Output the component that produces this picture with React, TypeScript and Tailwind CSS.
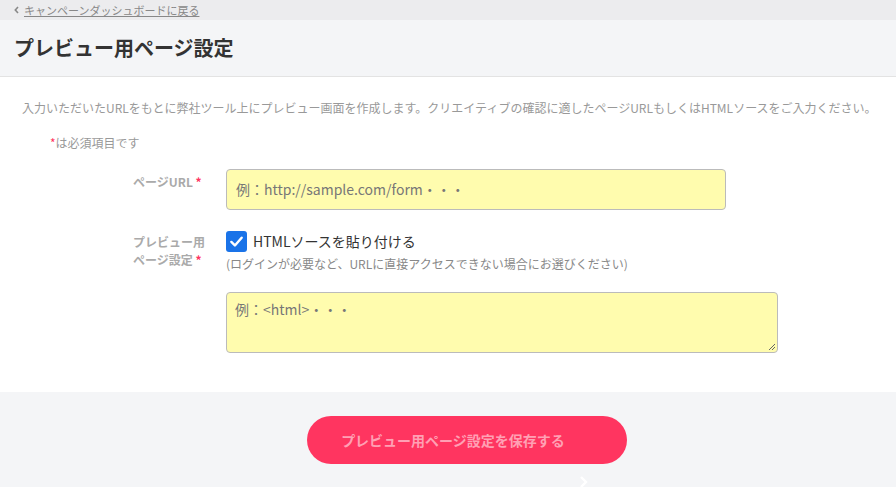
export default function App() {
  return (
    <div className="w-[896px] h-[487px] overflow-hidden bg-[#f4f5f7] text-[#333] [font-family:'Noto_Sans_CJK_JP','Noto_Sans',sans-serif]">
      <div className="h-[20px] bg-[#ececee] flex items-center pl-[14px] text-[11px] text-[#888]">
        <svg className="mr-[5px]" width="5" height="8" viewBox="0 0 5 8">
          <path d="M4 1 L1.3 4 L4 7" stroke="#888" strokeWidth="1.6" fill="none" />
        </svg>
        <a className="underline leading-none">キャンペーンダッシュボードに戻る</a>
      </div>
      <div className="h-[57px] flex items-center pl-[14px] border-b border-[#e3e3e3]">
        <h1 className="text-[20px] font-bold text-[#333]">プレビュー用ページ設定</h1>
      </div>
      <div className="bg-white h-[315px] pt-[22px]">
        <p className="pl-[22px] text-[12px] text-[#999] leading-[18px]">
          入力いただいたURLをもとに弊社ツール上にプレビュー画面を作成します。クリエイティブの確認に適したページURLもしくはHTMLソースをご入力ください。
        </p>
        <p className="pl-[50px] mt-[17px] text-[12px] text-[#999] leading-[18px]">
          <span className="text-[#ff3560]">*</span>は必須項目です
        </p>
        <div className="flex mt-[17px]">
          <div className="ml-[133px] w-[93px] pt-[4px] text-[12px] font-bold text-[#aaa] leading-[18px]">
            ページURL <span className="text-[#ff3560]">*</span>
          </div>
          <div className="w-[500px] h-[41px] bg-[#fffcae] border border-[#bbb] rounded-[4px] flex items-center px-[9px] text-[14px] text-[#777]">
            例：http://sample.com/form・・・
          </div>
        </div>
        <div className="flex mt-[20px]">
          <div className="ml-[133px] w-[93px] pt-[3px] text-[12px] font-bold text-[#aaa] leading-[18px]">
            <div>プレビュー用</div>
            <div>ページ設定 <span className="text-[#ff3560]">*</span></div>
          </div>
          <div>
            <div className="flex items-center h-[22px]">
              <span className="w-[21px] h-[21px] rounded-[3px] bg-[#1a73e8] flex items-center justify-center">
                <svg width="15" height="15" viewBox="0 0 16 16" fill="none">
                  <path d="M2.5 8.5 L6.3 12.2 L13.5 4" stroke="white" strokeWidth="2.6" strokeLinecap="round" strokeLinejoin="round" />
                </svg>
              </span>
              <span className="ml-[6px] text-[14px] text-[#333]">HTMLソースを貼り付ける</span>
            </div>
            <div className="mt-[3px] text-[12px] text-[#888] leading-[18px]">
              (ログインが必要など、URLに直接アクセスできない場合にお選びください)
            </div>
            <div className="relative mt-[19px] w-[552px] h-[61px] bg-[#fffcae] border border-[#bbb] rounded-[4px] px-[8px] pt-[6px] text-[14px] text-[#777] leading-[20px]">
              例：&lt;html&gt;・・・
              <svg className="absolute right-[2px] bottom-[2px]" width="7" height="7" viewBox="0 0 7 7">
                <path d="M1 7 L7 1 M4 7 L7 4" stroke="#666" strokeWidth="1" />
              </svg>
            </div>
          </div>
        </div>
      </div>
      <div className="relative flex justify-center pt-[24px] pl-[38px]">
        <button className="w-[320px] h-[48px] rounded-full bg-[#ff3560] pr-[28px] text-[14px] font-bold text-[#ffa0b4]">
          プレビュー用ページ設定を保存する
        </button>
        <svg className="absolute left-[578px] top-[84px]" width="10" height="12" viewBox="0 0 10 12">
          <path d="M3 1 L8 6 L3 11" stroke="white" strokeWidth="2.4" fill="none" />
        </svg>
      </div>
    </div>
  )
}
